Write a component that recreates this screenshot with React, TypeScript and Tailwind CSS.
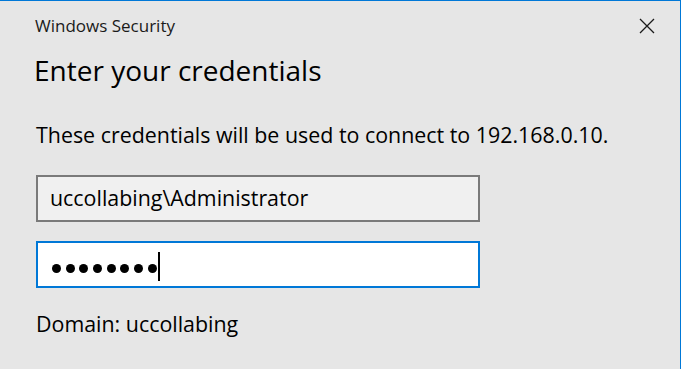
import React from "react"

export default function App() {
  return (
    <div className="w-[681px] h-[369px] bg-[#e6e6e6] border-t border-r border-[#0078d7] overflow-hidden font-['Open_Sans',sans-serif] text-black">
      {/* Title bar */}
      <div className="flex items-center justify-between h-[49px] pl-[35px] pr-[25px]">
        <span className="text-[17px] leading-none text-[#1a1a1a]">Windows Security</span>
        <svg width="16" height="16" viewBox="0 0 16 16" className="text-[#1a1a1a]">
          <path d="M1 1 L15 15 M15 1 L1 15" stroke="currentColor" strokeWidth="1.3" fill="none" />
        </svg>
      </div>

      <div className="pl-[34px] pr-[60px]">
        <h1 className="text-[28px] leading-[40px] font-normal whitespace-nowrap">Enter your credentials</h1>
        <p className="mt-[31px] text-[21.4px] leading-[28px] pl-[2px] whitespace-nowrap">
          These credentials will be used to connect to 192.168.0.10.
        </p>

        <div className="mt-[26px] ml-[2px] w-[444px] flex flex-col gap-[19px]">
          <div className="h-[47px] border-2 border-[#7a7a7a] bg-[#f0f0f0] flex items-center px-[12px] text-[21.4px] whitespace-nowrap">
            uccollabing\Administrator
          </div>
          <div className="h-[47px] border-2 border-[#0078d7] bg-white flex items-center px-[14px]">
            <div className="flex items-center gap-[4.7px] mt-[8px]">
              {Array.from({ length: 8 }).map((_, i) => (
                <span key={i} className="w-[9px] h-[9px] rounded-full bg-black" />
              ))}
            </div>
            <span className="ml-px mt-[4px] w-[2px] h-[29px] bg-black" />
          </div>
        </div>

        <p className="mt-[22px] text-[21.4px] leading-[28px] pl-[2px] whitespace-nowrap">Domain: uccollabing</p>
      </div>
    </div>
  )
}
